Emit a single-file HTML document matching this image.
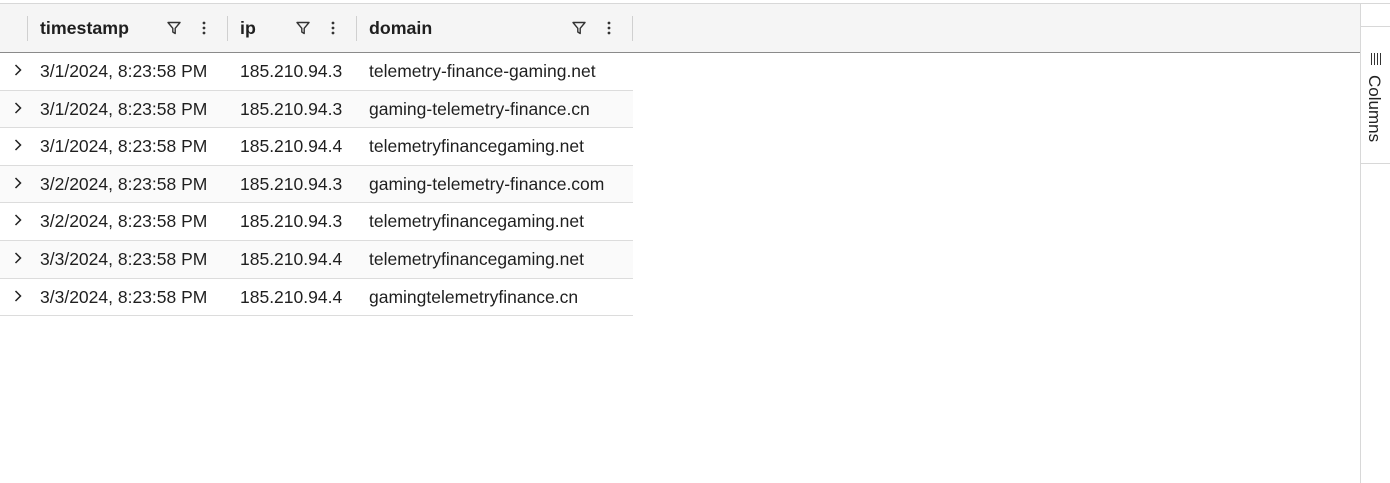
<!DOCTYPE html>
<html><head><meta charset="utf-8"><style>
*{box-sizing:border-box;margin:0;padding:0}
body{width:1390px;height:483px;background:#fff;font-family:"Liberation Sans",sans-serif;color:#1f1f1f;position:relative;overflow:hidden}
.top{position:absolute;left:0;top:3px;width:1360px;height:50px;background:#f5f5f5;border-top:1px solid #d8d8d8;border-bottom:1px solid #8a8a8a}
.hc{position:absolute;top:0;height:48px;display:flex;align-items:center;font-weight:bold;font-size:17.8px}
.sep{position:absolute;top:12px;width:1px;height:25px;background:#d0d0d0}
.ic{position:absolute;top:16px}
.row{position:absolute;left:0;width:633px;height:37.6px;border-bottom:1px solid #dcdcdc;font-size:17.5px}
.row span{position:absolute;top:8px}
.side{position:absolute;left:1360px;top:3px;width:30px;height:480px;border-left:1px solid #d8d8d8;border-top:1px solid #d8d8d8}
</style></head><body>
<div class="top">
 <div class="sep" style="left:27px"></div>
 <div class="hc" style="left:40px">timestamp</div>
 <svg class="ic" style="left:166px" width="16" height="16" viewBox="0 0 16 16"><path d="M2 2.5h12l-4.8 5.8v5.2l-2.4-1.5V8.3z" fill="none" stroke="#333" stroke-width="1.4" stroke-linejoin="round"/></svg>
 <svg class="ic" style="left:198px" width="12" height="16" viewBox="0 0 12 16"><circle cx="6" cy="3" r="1.4" fill="#333"/><circle cx="6" cy="8" r="1.4" fill="#333"/><circle cx="6" cy="13" r="1.4" fill="#333"/></svg>
 <div class="sep" style="left:227px"></div>
 <div class="hc" style="left:240px">ip</div>
 <svg class="ic" style="left:295px" width="16" height="16" viewBox="0 0 16 16"><path d="M2 2.5h12l-4.8 5.8v5.2l-2.4-1.5V8.3z" fill="none" stroke="#333" stroke-width="1.4" stroke-linejoin="round"/></svg>
 <svg class="ic" style="left:327px" width="12" height="16" viewBox="0 0 12 16"><circle cx="6" cy="3" r="1.4" fill="#333"/><circle cx="6" cy="8" r="1.4" fill="#333"/><circle cx="6" cy="13" r="1.4" fill="#333"/></svg>
 <div class="sep" style="left:356px"></div>
 <div class="hc" style="left:369px">domain</div>
 <svg class="ic" style="left:571px" width="16" height="16" viewBox="0 0 16 16"><path d="M2 2.5h12l-4.8 5.8v5.2l-2.4-1.5V8.3z" fill="none" stroke="#333" stroke-width="1.4" stroke-linejoin="round"/></svg>
 <svg class="ic" style="left:603px" width="12" height="16" viewBox="0 0 12 16"><circle cx="6" cy="3" r="1.4" fill="#333"/><circle cx="6" cy="8" r="1.4" fill="#333"/><circle cx="6" cy="13" r="1.4" fill="#333"/></svg>
 <div class="sep" style="left:632px"></div>
</div>

<div class="row" style="top:53px;background:#fff"><svg style="position:absolute;left:12px;top:10px" width="12" height="14" viewBox="0 0 12 14"><path d="M3.5 2l5 5-5 5" fill="none" stroke="#222" stroke-width="1.5"/></svg><span style="left:40px">3/1/2024, 8:23:58 PM</span><span style="left:240px">185.210.94.3</span><span style="left:369px">telemetry-finance-gaming.net</span></div>
<div class="row" style="top:90.6px;background:#fafafa"><svg style="position:absolute;left:12px;top:10px" width="12" height="14" viewBox="0 0 12 14"><path d="M3.5 2l5 5-5 5" fill="none" stroke="#222" stroke-width="1.5"/></svg><span style="left:40px">3/1/2024, 8:23:58 PM</span><span style="left:240px">185.210.94.3</span><span style="left:369px">gaming-telemetry-finance.cn</span></div>
<div class="row" style="top:128.2px;background:#fff"><svg style="position:absolute;left:12px;top:10px" width="12" height="14" viewBox="0 0 12 14"><path d="M3.5 2l5 5-5 5" fill="none" stroke="#222" stroke-width="1.5"/></svg><span style="left:40px">3/1/2024, 8:23:58 PM</span><span style="left:240px">185.210.94.4</span><span style="left:369px">telemetryfinancegaming.net</span></div>
<div class="row" style="top:165.8px;background:#fafafa"><svg style="position:absolute;left:12px;top:10px" width="12" height="14" viewBox="0 0 12 14"><path d="M3.5 2l5 5-5 5" fill="none" stroke="#222" stroke-width="1.5"/></svg><span style="left:40px">3/2/2024, 8:23:58 PM</span><span style="left:240px">185.210.94.3</span><span style="left:369px">gaming-telemetry-finance.com</span></div>
<div class="row" style="top:203.4px;background:#fff"><svg style="position:absolute;left:12px;top:10px" width="12" height="14" viewBox="0 0 12 14"><path d="M3.5 2l5 5-5 5" fill="none" stroke="#222" stroke-width="1.5"/></svg><span style="left:40px">3/2/2024, 8:23:58 PM</span><span style="left:240px">185.210.94.3</span><span style="left:369px">telemetryfinancegaming.net</span></div>
<div class="row" style="top:241px;background:#fafafa"><svg style="position:absolute;left:12px;top:10px" width="12" height="14" viewBox="0 0 12 14"><path d="M3.5 2l5 5-5 5" fill="none" stroke="#222" stroke-width="1.5"/></svg><span style="left:40px">3/3/2024, 8:23:58 PM</span><span style="left:240px">185.210.94.4</span><span style="left:369px">telemetryfinancegaming.net</span></div>
<div class="row" style="top:278.6px;background:#fff"><svg style="position:absolute;left:12px;top:10px" width="12" height="14" viewBox="0 0 12 14"><path d="M3.5 2l5 5-5 5" fill="none" stroke="#222" stroke-width="1.5"/></svg><span style="left:40px">3/3/2024, 8:23:58 PM</span><span style="left:240px">185.210.94.4</span><span style="left:369px">gamingtelemetryfinance.cn</span></div>

<div class="side">
 <div style="position:absolute;left:0;top:22px;width:30px;height:1px;background:#d8d8d8"></div>
 <svg style="position:absolute;left:9px;top:48px" width="13" height="14" viewBox="0 0 13 14"><path d="M1.5 1v12M4.5 1v12M7.5 1v12M10.5 1v12" stroke="#333" stroke-width="1"/></svg>
 <div style="position:absolute;left:3px;top:71px;writing-mode:vertical-rl;font-size:17px;color:#222">Columns</div>
 <div style="position:absolute;left:0;top:159px;width:30px;height:1px;background:#d8d8d8"></div>
</div>
</body></html>
